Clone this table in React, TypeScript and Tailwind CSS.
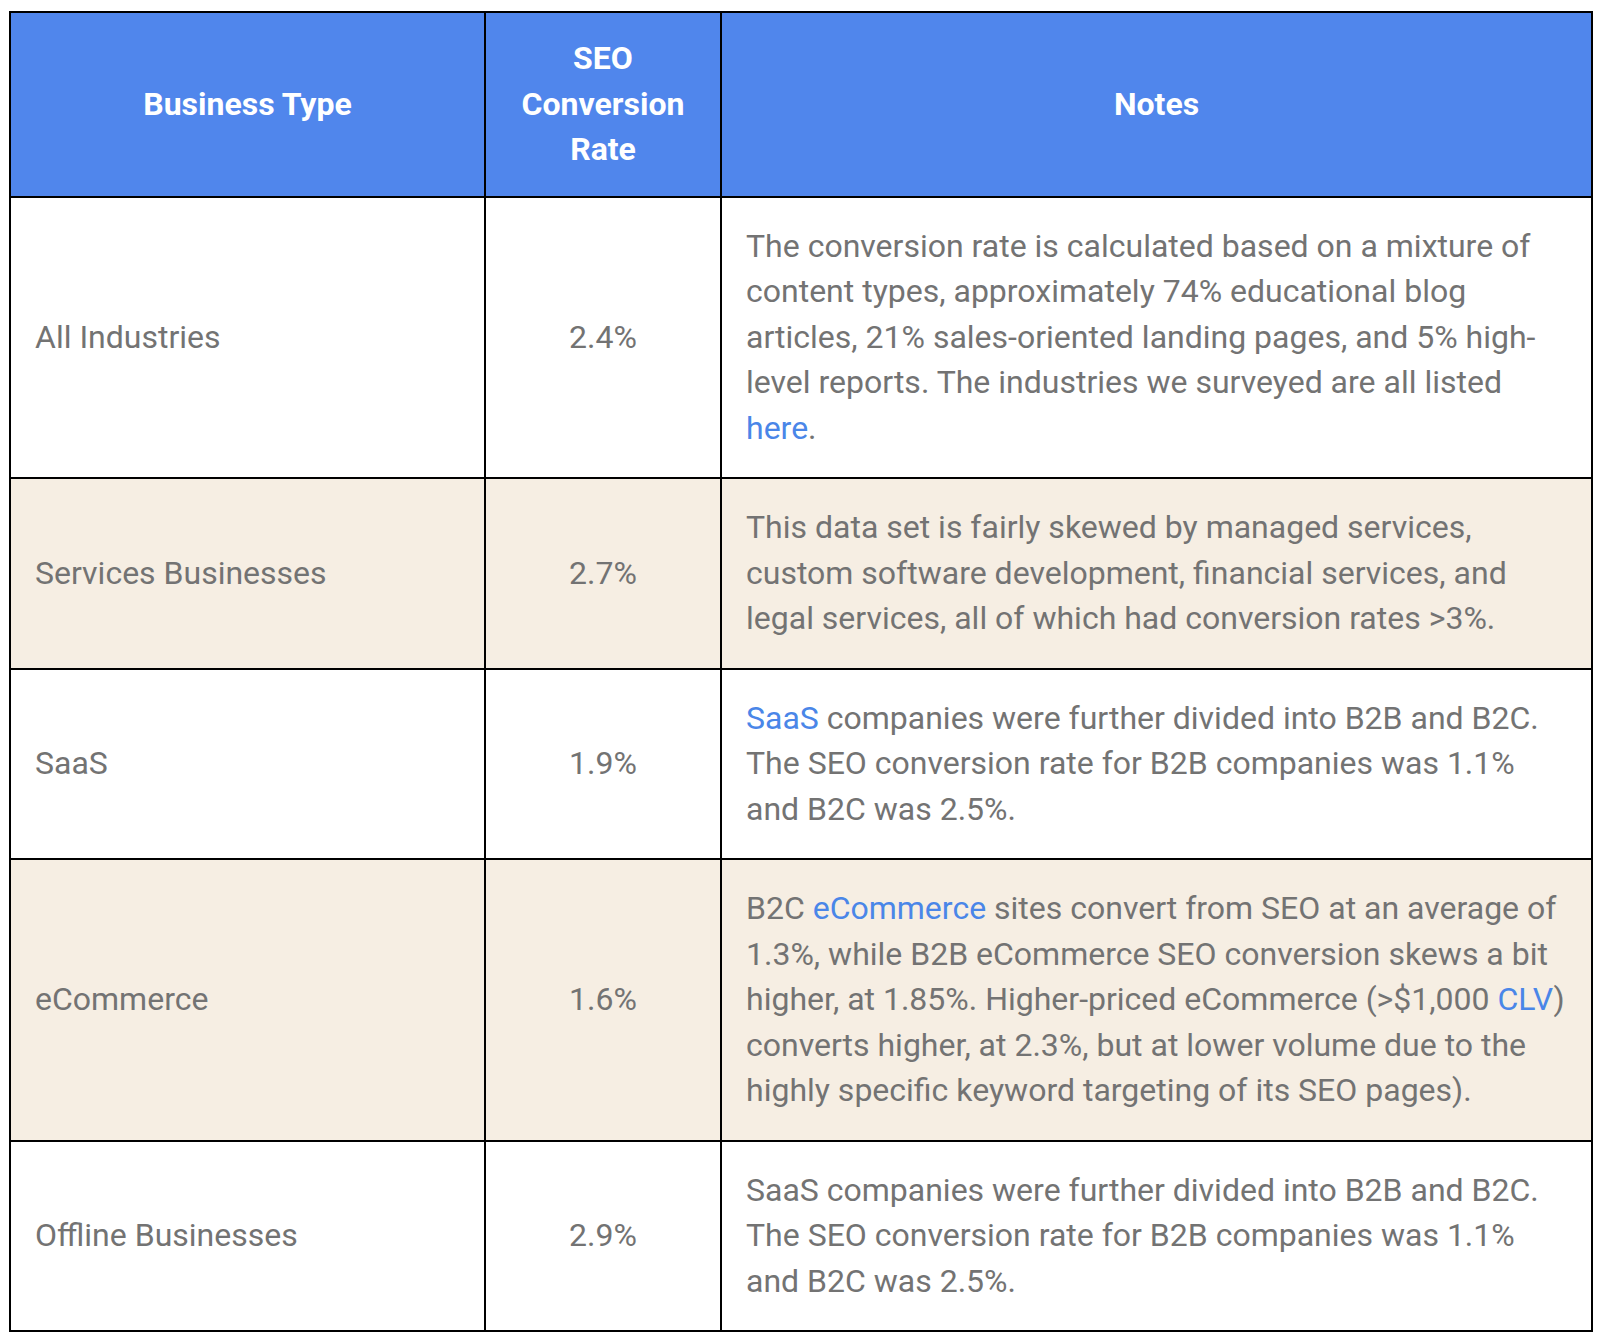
import React from "react";

type Row = {
  type: string;
  rate: string;
  notes: React.ReactNode;
  shaded?: boolean;
};

const Link = ({ children }: { children: React.ReactNode }) => (
  <a href="#" className="text-[#4a86e8]">
    {children}
  </a>
);

const rows: Row[] = [
  {
    type: "All Industries",
    rate: "2.4%",
    notes: (
      <>
        The conversion rate is calculated based on a mixture of content types,
        approximately 74% educational blog articles, 21% sales-oriented landing
        pages, and 5% high-level reports. The industries we surveyed are all
        listed <Link>here</Link>.
      </>
    ),
  },
  {
    type: "Services Businesses",
    rate: "2.7%",
    shaded: true,
    notes: (
      <>
        This data set is fairly skewed by managed services, custom software
        development, financial services, and legal services, all of which had
        conversion rates &gt;3%.
      </>
    ),
  },
  {
    type: "SaaS",
    rate: "1.9%",
    notes: (
      <>
        <Link>SaaS</Link> companies were further divided into B2B and B2C. The
        SEO conversion rate for B2B companies was 1.1% and B2C was 2.5%.
      </>
    ),
  },
  {
    type: "eCommerce",
    rate: "1.6%",
    shaded: true,
    notes: (
      <>
        B2C <Link>eCommerce</Link> sites convert from SEO at an average of
        1.3%, while B2B eCommerce SEO conversion skews a bit higher, at 1.85%.
        Higher-priced eCommerce (&gt;$1,000 <Link>CLV</Link>) converts higher,
        at 2.3%, but at lower volume due to the highly specific keyword
        targeting of its SEO pages).
      </>
    ),
  },
  {
    type: "Offline Businesses",
    rate: "2.9%",
    notes: (
      <>
        SaaS companies were further divided into B2B and B2C. The SEO
        conversion rate for B2B companies was 1.1% and B2C was 2.5%.
      </>
    ),
  },
];

export default function App() {
  return (
    <div className="min-h-screen bg-white pt-[11px] pl-[9px] font-['Roboto',sans-serif] text-[32px] leading-[45.5px]">
      {/* black bg + gaps draw the cell borders */}
      <div className="grid w-[1584px] grid-cols-[473px_234px_1fr] gap-[2px] bg-black p-[2px]">
        <div className="flex items-center justify-center bg-[#5086ec] px-6 py-[23px] text-center font-bold text-white">
          Business Type
        </div>
        <div className="flex items-center justify-center bg-[#5086ec] px-6 py-[23px] text-center font-bold text-white">
          SEO Conversion Rate
        </div>
        <div className="flex items-center justify-center bg-[#5086ec] px-6 py-[23px] text-center font-bold text-white">
          Notes
        </div>

        {rows.map((row) => {
          const bg = row.shaded ? "bg-[#f6eee3]" : "bg-white";
          return (
            <React.Fragment key={row.type}>
              <div className={`flex items-center px-6 py-[26px] text-[#737373] ${bg}`}>
                {row.type}
              </div>
              <div className={`flex items-center justify-center px-6 py-[26px] text-[#737373] ${bg}`}>
                {row.rate}
              </div>
              <div className={`flex items-center px-6 py-[26px] text-[#737373] ${bg}`}>
                <p>{row.notes}</p>
              </div>
            </React.Fragment>
          );
        })}
      </div>
    </div>
  );
}
